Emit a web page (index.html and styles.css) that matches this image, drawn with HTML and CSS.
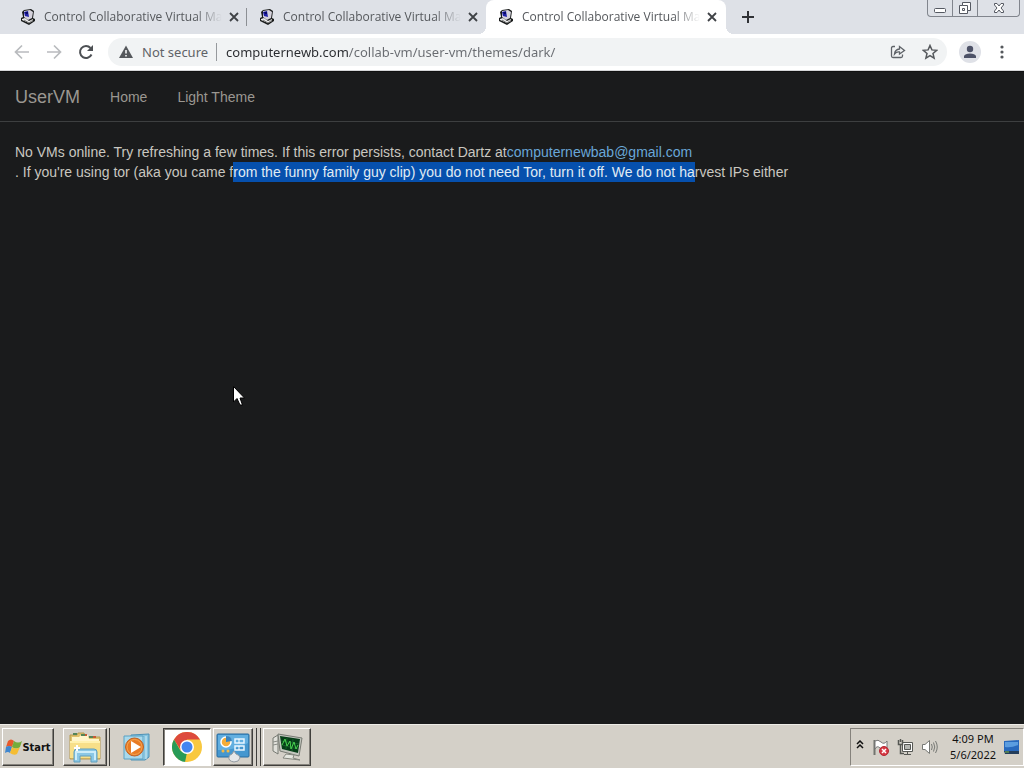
FILE: index.html
```html
<!DOCTYPE html>
<html lang="en">
<head>
<meta charset="utf-8">
<title>Control Collaborative Virtual Machines</title>
<link rel="stylesheet" href="styles.css">
</head>
<body>
<svg class="defs" aria-hidden="true">
  <symbol id="pc" viewBox="0 0 16 16">
    <path d="M4 1L11 0L14 2L13 9L15 10V12L9 16L1 12V9L3 8L2 3Z" fill="#191b1b"/>
    <path d="M4 2L10 1L13 3L12 9L8 11L4 8Z" fill="#d5d2dc"/>
    <path d="M4 3L8 2L9 8L5 7Z" fill="#2020a8"/>
    <path d="M5 3L8 3L8 5L6 5Z" fill="#090966"/>
    <path d="M2 10L5 9L9 12L13 10V12L9 14L2 11Z" fill="#ededed"/>
    <path d="M4 11L9 14L13 11" fill="none" stroke="#777"/>
  </symbol>
  <symbol id="cross" viewBox="0 0 10 10"><path d="M1 1L9 9M9 1L1 9" stroke="#3f4246" stroke-width="1.8"/></symbol>
</svg>
<header class="browser">
  <div class="strip">
    <div class="tabs">
      <div class="tab"><svg class="fav"><use href="#pc"/></svg><span class="tab-title">Control Collaborative Virtual Ma</span><button class="close" aria-label="Close tab"><svg><use href="#cross"/></svg></button></div>
      <div class="tab"><svg class="fav"><use href="#pc"/></svg><span class="tab-title">Control Collaborative Virtual Ma</span><button class="close" aria-label="Close tab"><svg><use href="#cross"/></svg></button></div>
      <div class="tab active"><svg class="fav"><use href="#pc"/></svg><span class="tab-title">Control Collaborative Virtual Ma</span><button class="close" aria-label="Close tab"><svg><use href="#cross"/></svg></button></div>
      <button class="new-tab" aria-label="New tab"><svg viewBox="0 0 12 12" width="12" height="12"><path d="M6 0V12M0 6H12" stroke="#303236" stroke-width="2"/></svg></button>
    </div>
    <div class="window-buttons">
      <button aria-label="Minimize"><svg width="14" height="16" viewBox="0 0 14 16"><rect x="1.500" y="8.500" width="11" height="4" rx="1" fill="#fff" stroke="#555962"/></svg></button>
      <button aria-label="Restore"><svg width="14" height="16" viewBox="0 0 14 16"><path d="M4.500 2.500H12.500V10.500H9.500V13.500H1.500V5.500H4.500Z" fill="#fff" stroke="#555962"/><path d="M4.500 5.500H9.500V10.500M4.500 8.500H6.500V10.500H4.500Z" fill="none" stroke="#555962"/></svg></button>
      <button aria-label="Close window"><svg width="14" height="16" viewBox="0 0 14 16"><path d="M2.500 3.500H5L7 6L9 3.500H11.500V5L9 8L11.500 11V12.500H9L7 10L5 12.500H2.500V11L5 8L2.500 5Z" fill="#fff" stroke="#555962"/></svg></button>
    </div>
  </div>
  <div class="toolbar">
    <button class="tool" aria-label="Back"><svg width="16" height="16" viewBox="0 0 16 16" fill="none" stroke="#b9bbbe" stroke-width="1.700"><path d="M15 8H2M8 1.500L1.500 8L8 14.500"/></svg></button>
    <button class="tool" aria-label="Forward"><svg width="16" height="16" viewBox="0 0 16 16" fill="none" stroke="#b9bbbe" stroke-width="1.700"><path d="M1 8H14M8 1.500L14.500 8L8 14.500"/></svg></button>
    <button class="tool" aria-label="Reload"><svg width="16" height="16" viewBox="0 0 16 16"><path d="M13.500 10.500A6 6 0 1 1 12.500 4" fill="none" stroke="#4d5054" stroke-width="2"/><path d="M15 1V7H9Z" fill="#4d5054"/></svg></button>
    <div class="omnibox">
      <svg width="14" height="14" viewBox="0 0 14 14"><path d="M7 0.500L14 13H0Z" fill="#55585c"/><path d="M7 5V8.500M7 10V11.500" stroke="#fff" stroke-width="1.500"/></svg>
      <label class="secure" for="url">Not secure</label>
      <input class="url" id="url" type="text" spellcheck="false" value="computernewb.com/collab-vm/user-vm/themes/dark/">
      <button class="tool" aria-label="Share"><svg width="16" height="16" viewBox="0 0 16 16" fill="none" stroke="#5f6368" stroke-width="1.300"><path d="M5 2.500H3Q1.500 2.500 1.500 4V12Q1.500 13.500 3 13.500H11Q12.500 13.500 12.500 12V10.500M4.500 10Q5 5.500 9.500 5V2.500L14.500 6.500L9.500 10V8Q6.500 7.500 4.500 10Z"/></svg></button>
      <button class="tool" aria-label="Bookmark"><svg width="16" height="16" viewBox="0 0 16 16"><path d="M8 1.500L9.900 5.900L14.700 6.300L11 9.500L12.100 14.200L8 11.700L3.900 14.200L5 9.500L1.300 6.300L6.100 5.900Z" fill="none" stroke="#55585c" stroke-width="1.500"/></svg></button>
    </div>
    <button class="avatar" aria-label="Profile"><svg width="14" height="14" viewBox="0 0 14 14" fill="#4d5267"><circle cx="7" cy="4" r="3.200"/><path d="M1 13V11Q2 8.500 7 8.500T13 11V13Z"/></svg></button>
    <button class="tool menu" aria-label="Menu"><svg width="16" height="16" viewBox="0 0 16 16" fill="#55585c"><circle cx="8" cy="3" r="1.600"/><circle cx="8" cy="8" r="1.600"/><circle cx="8" cy="13" r="1.600"/></svg></button>
  </div>
</header>
<main class="page">
  <nav class="navbar">
    <a class="brand" href="#">UserVM</a>
    <a href="#">Home</a>
    <a href="#">Light Theme</a>
  </nav>
  <p class="message">No VMs online. Try refreshing a few times. If this error persists, contact Dartz at<a href="mailto:computernewbab@gmail.com">computernewbab@gmail.com</a><br>. If you're using tor (aka you came f<mark>rom the funny family guy clip) you do not need Tor, turn it off. We do not ha</mark>rvest IPs either</p>
</main>
<svg class="cursor" width="12" height="20" viewBox="0 0 12 20" aria-hidden="true"><path d="M0.500 0.500V16L4 12.500L7 19H9.500L7 12H11.500Z" fill="#fff" stroke="#000"/></svg>
<footer class="taskbar">
  <button class="start">
    <svg width="17" height="16" viewBox="0 0 17 16"><path d="M3 2Q6 -1 9 2L7 8Q4 6 1 8Z" fill="#e7592b"/><path d="M9 2Q13 5 17 2L15 8Q11 11 7 8Z" fill="#75ad3c"/><path d="M1 8Q4 6 7 8L5 14Q3 12 0 14Z" fill="#3f86cf"/><path d="M7 8Q11 11 15 8L12 15Q9 17 5 14Z" fill="#f5bd32"/></svg>
    <span>Start</span>
  </button>
  <div class="tasks">
    <button class="task double" aria-label="Windows Explorer"><svg width="34" height="34" viewBox="0 0 34 34"><path d="M2 5H9L10 3H16L17 7H32V29H2Z" fill="#e1c36c" stroke="#b69a50"/><path d="M4 7H11L13 5H20L21 9H31V13H4Z" fill="#fff5cb"/><path d="M5 4H9M13 5H17M21 7H25" stroke="#538458" stroke-width="2"/><path d="M17 5H19M25 7H28" stroke="#c75a36" stroke-width="2"/><path d="M2 11H32V28H2Z" fill="#f7df89"/><path d="M2 12H32" stroke="#fff1ae" stroke-width="2"/><path d="M6 32V22Q6 19 9 19H26Q29 19 29 22V32H23V26H12V32Z" fill="#8bc8e6" stroke="#609fbd"/><path d="M8 30V22H27V30" fill="none" stroke="#cdedf9" stroke-width="2"/><path d="M9 15V21M6 18H12" stroke="#fff" stroke-width="2"/></svg></button>
    <button class="task plain" aria-label="Windows Media Player"><svg width="30" height="30" viewBox="0 0 30 30"><path d="M9 3L27 2V25L23 28H9Z" fill="#86c4df" stroke="#4c91b6"/><path d="M24 4V27M21 5V27" stroke="#d1edf7"/><path d="M2 4H21V27H2Z" fill="#a9d9eb" stroke="#5ba1c4"/><circle cx="12.500" cy="15" r="9" fill="#e87b24" stroke="#c06024"/><circle cx="12.500" cy="15" r="7.500" fill="none" stroke="#f5a44f"/><path d="M9 9L19 15L9 21Z" fill="#fff"/></svg></button>
    <button class="task pressed" aria-label="Google Chrome"><svg width="30" height="30" viewBox="0 0 30 30"><circle cx="15" cy="15" r="15" fill="#f8c83f"/><path d="M2 7.500A15 15 0 0 1 28 7.500H15L9 18.500Z" fill="#dd4a3d"/><path d="M2 7.500L8.500 18.700L15 22L14 30A15 15 0 0 1 2 7.500Z" fill="#289b57"/><path d="M21.500 18.700L15 30H13L15 21Z" fill="#f8c83f"/><circle cx="15" cy="15" r="7" fill="#fff"/><circle cx="15" cy="15" r="5.500" fill="#4285f0"/></svg></button>
    <button class="task triple" aria-label="Control Panel"><svg width="34" height="34" viewBox="0 0 34 34"><rect x="1" y="4" width="32" height="23" rx="1" fill="#4597cf" stroke="#266b9f"/><path d="M2 5H32V13Q17 21 2 20Z" fill="#62afe0"/><circle cx="10" cy="12" r="5" fill="#f4ad38" stroke="#fff" stroke-width="1.500"/><path d="M10 12V6A6 6 0 0 1 16 11Z" fill="#3c83bb"/><path d="M19 9H28V13H19ZM19 16H28V20H19Z" fill="none" stroke="#e7f6ff" stroke-width="1.500"/><path d="M23 9V13M23 16V20" stroke="#fff"/><circle cx="7" cy="21" r="1.500" fill="#f4b943"/><circle cx="12" cy="21" r="1.500" fill="#f4b943"/><path d="M16 24L18 21L20 24Q24 25 24 28Q23 32 18 32Q12 31 13 27Q13 25 16 24Z" fill="#e5e7e9" stroke="#929aa0"/></svg></button>
    <button class="task" aria-label="Task Manager"><svg width="32" height="32" viewBox="0 0 32 32"><path d="M2 7L7 4V23L2 20Z" fill="#e0e0da" stroke="#777a73"/><path d="M2 11L7 10M2 14L7 13" stroke="#8a8d87"/><path d="M7 3L31 7L28 25L9 20Z" fill="#c4c7bf" stroke="#777a73"/><path d="M9 5L29 8L27 22L11 18Z" fill="#063e18"/><path d="M10 10L28 13M11 14L27 18M16 7L15 18M22 8L21 20" stroke="#17602a"/><path d="M11 14L14 8L16 15L19 10L20 18L23 11L25 18L27 14" fill="none" stroke="#48d34f"/><path d="M15 23L23 24L22 27L29 29L12 27Z" fill="#e4e6df" stroke="#84877f"/></svg></button>
  </div>
  <div class="tray">
    <button class="tray-icon" aria-label="Show hidden icons"><svg width="8" height="14" viewBox="0 0 8 14" fill="none" stroke="#111" stroke-width="1.500"><path d="M1 4L4 1L7 4M1 8L4 5L7 8"/></svg></button>
    <button class="tray-icon" aria-label="Action Center"><svg width="16" height="17" viewBox="0 0 16 17"><path d="M1.500 1V16" stroke="#72746f" stroke-width="2"/><path d="M2 2Q5 0 8 3T14 2V9Q10 12 7 9T2 10Z" fill="#fff" stroke="#777"/><circle cx="11" cy="12" r="4.500" fill="#d73944" stroke="#b32833"/><path d="M9 10L13 14M13 10L9 14" stroke="#fff" stroke-width="1.500"/></svg></button>
    <button class="tray-icon" aria-label="Network"><svg width="16" height="16" viewBox="0 0 16 16" fill="none" stroke="#555753"><path d="M5.500 3.500H15.500V12.500H5.500Z" fill="#fff"/><path d="M7.500 5.500H13.500V10.500H7.500Z" fill="#b4b6b2"/><path d="M10.500 13V15M7 15.500H14"/><path d="M1.500 1V5.500H5.500V1M3.500 0V3M3.500 6V14.500H7" stroke-width="1.500"/></svg></button>
    <button class="tray-icon" aria-label="Volume"><svg width="17" height="16" viewBox="0 0 17 16" fill="none" stroke="#777975"><path d="M1.500 5.500H4L8.500 1.500V14.500L4 10.500H1.500Z" fill="#fff"/><path d="M10.500 5Q12 8 10.500 11M12.500 3.500Q15 8 12.500 12.500M14.500 2Q18 8 14.500 14"/></svg></button>
    <time class="clock" datetime="2022-05-06T16:09"><span>4:09 PM</span><span>5/6/2022</span></time>
    <button class="tray-icon desktop" aria-label="Show desktop"><svg width="15" height="14" viewBox="0 0 15 14"><path d="M0 1L15 0V12H0Z" fill="#2869bd"/><path d="M1 2H14V5Q7 8 1 7Z" fill="#5b9de0"/><path d="M0 11H15V14H1Z" fill="#233d5b"/><path d="M1 12H5" stroke="#7dbb50"/></svg></button>
  </div>
</footer>
</body>
</html>
```
FILE: styles.css
```css
* { box-sizing: border-box; }
body {
  margin: 0;
  min-height: 100vh;
  display: flex;
  flex-direction: column;
  background: #1a1b1c;
  font-family: "Liberation Sans", Arial, sans-serif;
  font-size: 14px;
}
button {
  display: flex;
  align-items: center;
  justify-content: center;
  padding: 0;
  border: 0;
  background: none;
  color: inherit;
  font: inherit;
  flex: none;
}
svg { flex: none; display: block; }
.defs { position: absolute; width: 0; height: 0; }

.browser { font-family: "Open Sans", "Noto Sans", sans-serif; color: #55585c; }
.strip { display: flex; justify-content: space-between; height: 34px; background: #dee1e7; }
.tabs { display: flex; padding-left: 8px; min-width: 0; }
.tab {
  display: flex;
  align-items: center;
  width: 239px;
  padding: 0 7px 0 12px;
  min-width: 0;
}
.tab:first-child { background: linear-gradient(#8c8f94, #8c8f94) right center / 1px 18px no-repeat; }
.tab.active { position: relative; width: 240px; padding-right: 8px; background: #fff; border-radius: 8px 8px 0 0; }
.tab.active::before, .tab.active::after {
  content: "";
  position: absolute;
  bottom: 0;
  width: 8px;
  height: 8px;
}
.tab.active::before { right: 100%; background: radial-gradient(circle at 0 0, transparent 8px, #fff 8px); }
.tab.active::after { left: 100%; background: radial-gradient(circle at 100% 0, transparent 8px, #fff 8px); }
.fav { width: 16px; height: 16px; margin-right: 8px; }
.tab-title {
  flex: 1;
  white-space: nowrap;
  font-size: 12px;
  line-height: 16px;
  mask-image: linear-gradient(to right, #000 85%, transparent);
}
.close { width: 16px; height: 16px; margin-left: 4px; }
.close svg { width: 10px; height: 10px; }
.new-tab { width: 28px; margin-left: 8px; }
.window-buttons {
  display: flex;
  height: 17px;
  margin-right: 4px;
  border: 1px solid #81858d;
  border-top: 0;
  border-radius: 0 0 4px 4px;
}
.window-buttons button { width: 25px; border-right: 1px solid #81858d; }
.window-buttons button:last-child { width: 41px; border: 0; }

.toolbar { display: flex; align-items: center; height: 37px; padding: 0 8px; background: #fff; border-bottom: 1px solid #d5d6d8; }
.tool { width: 28px; height: 28px; }
.toolbar > .tool { margin-right: 4px; }
.omnibox { flex: 1; display: flex; align-items: center; min-width: 0; height: 28px; padding: 0 3px 0 11px; border-radius: 14px; background: #f1f3f4; }
.toolbar > .omnibox { margin-left: 4px; }
.secure { padding: 0 8px 0 9px; border-right: 1px solid #96999d; font: 13px/18px "Noto Sans", "Open Sans", sans-serif; color: #5f6368; white-space: nowrap; }
.url {
  flex: 1;
  min-width: 0;
  height: 24px;
  padding: 0 0 0 9px;
  border: 0;
  outline: 0;
  font: 13px/20px "Noto Sans", "Open Sans", sans-serif;
  color: transparent;
  background: linear-gradient(to right, #292b2f 131px, #686b70 131px);
  background-clip: text;
}
.omnibox .tool + .tool { margin-left: 4px; }
.avatar { width: 22px; height: 22px; margin: 0 7px 0 12px; border-radius: 50%; background: #dfe1e7; }
.toolbar > .menu { margin-right: 0; }

.page { flex: 1; border-top: 1px solid #111; line-height: 20px; color: #c9c7c0; }
.navbar { display: flex; align-items: center; gap: 30px; height: 50px; padding: 0 15px; border-bottom: 1px solid #3d3f40; }
.navbar a { color: #9a9791; text-decoration: none; }
.navbar .brand { font-size: 18px; }
.message { margin: 20px 15px; }
.message a { color: #69a7d8; text-decoration: none; }
.message mark { padding: 2px 0; background: #0650ad; color: #e0ecf4; }
.cursor { position: absolute; left: 233px; top: 386px; }

.taskbar {
  display: flex;
  height: 44px;
  padding: 3px 0 2px 2px;
  border-top: 1px solid #eeece7;
  background: #d4d0c8;
  color: #111;
}
.start, .task { border: 1px solid; border-color: #fff #403f3c #403f3c #fff; box-shadow: inset -1px -1px #85827c; }
.start { width: 52px; height: 38px; font: bold 11px "DejaVu Sans Condensed", "DejaVu Sans", sans-serif; }
.tasks { flex: 1; display: flex; padding-left: 9px; }
.task { width: 48px; height: 38px; }
.task.double { width: 44px; margin-right: 10px; box-shadow: inset -1px -1px #85827c, 2px 0 #d4d0c8, 3px 0 #403f3c; }
.task.plain { width: 42px; margin-right: 4px; border-color: transparent; box-shadow: none; padding-right: 2px; }
.task.pressed { margin: 0 2px 0 0; background: #fff; border-color: #403f3c #fff #fff #403f3c; box-shadow: inset 1px 1px #85827c; }
.task.triple { width: 40px; margin-right: 10px; box-shadow: inset -1px -1px #85827c, 3px 0 #d4d0c8, 4px 0 #403f3c, 7px 0 #d4d0c8, 8px 0 #403f3c; }
.tray { display: flex; align-items: center; height: 38px; padding-left: 5px; border: 1px solid; border-color: #85827c #fff #fff #85827c; }
.tray-icon { width: 16px; margin-right: 8px; }
.tray-icon:first-child { width: 8px; margin-right: 9px; }
.clock { display: flex; flex-direction: column; align-items: center; width: 48px; margin: 0 6px 0 4px; font: 11px/16px "Noto Sans", "Open Sans", sans-serif; white-space: nowrap; }
.tray-icon.desktop { margin: 0 4px 0 0; }
```
